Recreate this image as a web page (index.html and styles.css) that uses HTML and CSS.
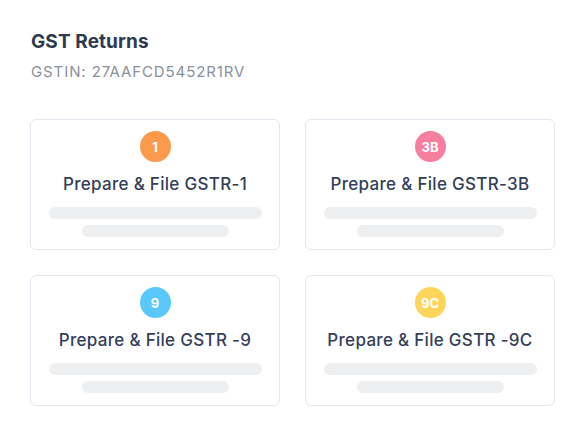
FILE: index.html
```html
<!DOCTYPE html>
<html>
<head>
<meta charset="utf-8">
<link rel="stylesheet" href="styles.css">
</head>
<body>
<div class="page">
  <h1 class="title">GST Returns</h1>
  <div class="gstin">GSTIN: 27AAFCD5452R1RV</div>
  <div class="grid">
    <div class="card">
      <div class="badge orange">1</div>
      <div class="card-title">Prepare &amp; File GSTR-1</div>
      <div class="bar long"></div>
      <div class="bar short"></div>
    </div>
    <div class="card">
      <div class="badge pink">3B</div>
      <div class="card-title">Prepare &amp; File GSTR-3B</div>
      <div class="bar long"></div>
      <div class="bar short"></div>
    </div>
    <div class="card">
      <div class="badge blue">9</div>
      <div class="card-title">Prepare &amp; File GSTR -9</div>
      <div class="bar long"></div>
      <div class="bar short"></div>
    </div>
    <div class="card">
      <div class="badge yellow">9C</div>
      <div class="card-title">Prepare &amp; File GSTR -9C</div>
      <div class="bar long"></div>
      <div class="bar short"></div>
    </div>
  </div>
</div>
</body>
</html>
```
FILE: styles.css
```css
* { box-sizing: border-box; }
html, body { margin: 0; background: #ffffff; }
body { font-family: "Inter", "Noto Sans", sans-serif; color: #2d3a4f; }
.page { padding: 31px 31px 0 30px; }
.title {
  margin: 0 0 0 1px;
  font-size: 19px;
  line-height: 22px;
  font-weight: 700;
  letter-spacing: 0.1px;
  color: #2d3a4f;
}
.gstin {
  margin: 10px 0 0 1px;
  font-size: 15px;
  line-height: 18px;
  letter-spacing: 0.9px;
  color: #8b909c;
}
.grid {
  margin-top: 38px;
  display: grid;
  grid-template-columns: 250px 250px;
  column-gap: 25px;
  row-gap: 25px;
}
.card {
  height: 131px;
  border: 1px solid #e3e6ee;
  border-radius: 6px;
  display: flex;
  flex-direction: column;
  align-items: center;
  padding-top: 11px;
}
.badge {
  width: 31px;
  height: 31px;
  border-radius: 50%;
  color: #fff;
  font-size: 13px;
  font-weight: 700;
  display: flex;
  align-items: center;
  justify-content: center;
}
.orange { background: #fb9a4c; }
.pink { background: #f67fa0; }
.blue { background: #5ac8fb; }
.yellow { background: #fdd55a; }
.card-title {
  margin-top: 12px;
  font-size: 17px;
  line-height: 20px;
  font-weight: 500;
  letter-spacing: 0.3px;
  color: #34405a;
}
.bar {
  height: 12px;
  border-radius: 6px;
  background: #eeeff1;
}
.long { width: 213px; margin-top: 13px; }
.short { width: 147px; margin-top: 6px; }
```
